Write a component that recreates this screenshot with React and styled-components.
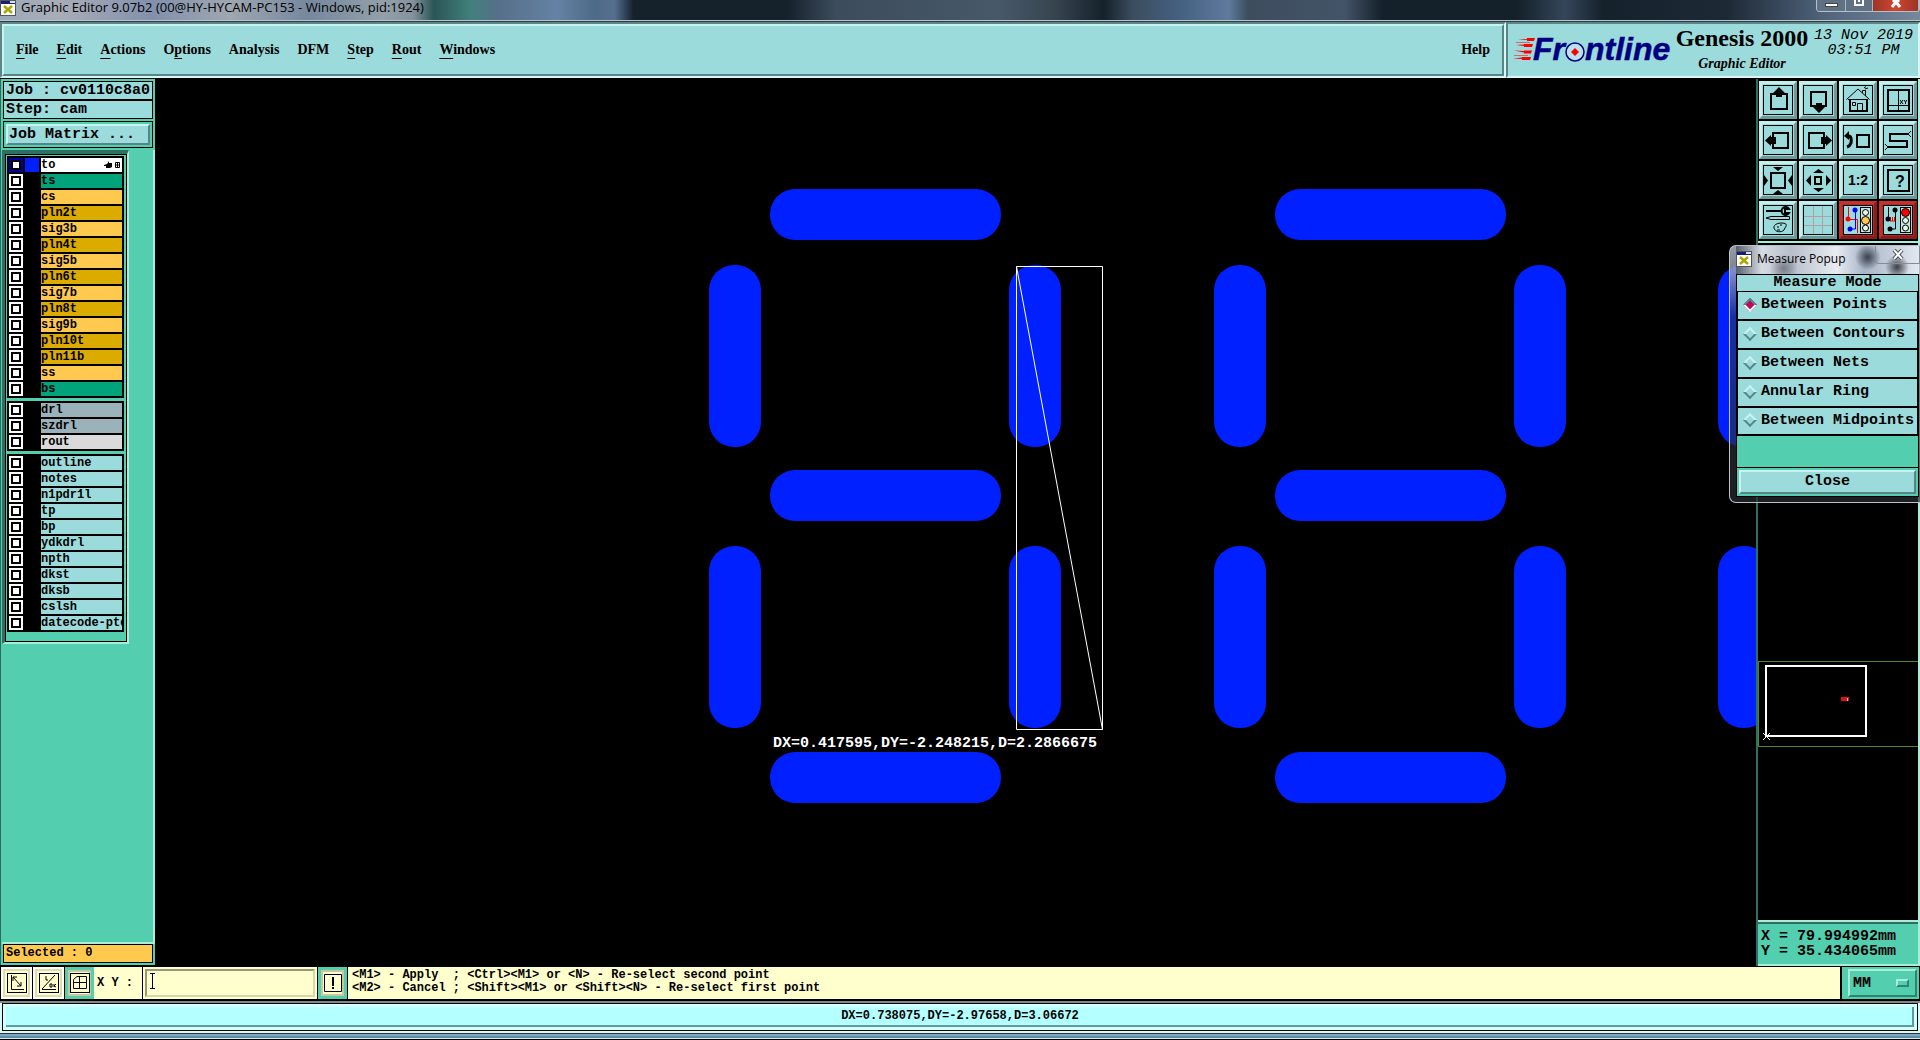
import { useState } from "react";
import styled, { createGlobalStyle, css } from "styled-components";

const face = "#9bdbdb";
const green = "#53cfb0";
const cream = "#ffffce";
const mono = `"Liberation Mono", "Courier New", monospace`;
const serif = `"Liberation Serif", "Times New Roman", serif`;
const ui = `"Open Sans", "Noto Sans", sans-serif`;

const GlobalStyle = createGlobalStyle`
  * {
    box-sizing: border-box;
  }
  body {
    margin: 0;
    background: #000;
    overflow: hidden;
  }
  button, input, select {
    margin: 0;
    padding: 0;
    border: 0;
    border-radius: 0;
    color: #000;
    background: none;
    font: inherit;
  }
  svg {
    display: block;
  }
`;

const raised = css`
  border: 2px solid;
  border-color: #c9f3f1 #568587 #568587 #c9f3f1;
`;

const Screen = styled.div`
  position: relative;
  display: flex;
  flex-direction: column;
  height: 100vh;
  color: #000;
  background: #000;
  font-family: ${mono};
  font-size: 15px;
  font-weight: bold;
`;

/* ---------- title bar ---------- */

const TitleBar = styled.div`
  position: relative;
  display: flex;
  align-items: flex-start;
  flex: none;
  height: 22px;
  overflow: hidden;
  border-bottom: 1px solid #2b3d47;
  box-shadow: inset 0 -1px 0 #b9c6cd;
  background: linear-gradient(
    90deg,
    #9aa8b8 0,
    #a9adb8 3%,
    #8290ac 8%,
    #9fa7b0 12%,
    #76889f 16%,
    #93a0a9 20%,
    #83929c 21.5%,
    #2b5555 22.6%,
    #41807c 24.5%,
    #566f8a 26%,
    #6582a4 29%,
    #4d6a88 31%,
    #55708e 32%,
    #15212b 33%,
    #15212b 41%,
    #3c4c5c 43.5%,
    #475869 52%,
    #36444f 55%,
    #15212b 57.5%,
    #3b4d5e 59%,
    #456182 61.5%,
    #5f7a9c 64%,
    #3d4d5e 65%,
    #445468 70%,
    #14202a 72%,
    #14202a 79%,
    #35465a 81.5%,
    #15212b 83.5%,
    #1d2a36 90%,
    #50637b 95%,
    #77889c 100%
  );
`;

const TitleText = styled.div`
  margin-left: 5px;
  margin-top: -2px;
  font: 13px/18px ${ui};
  white-space: nowrap;
`;

const WindowButtons = styled.div`
  display: flex;
  margin-left: auto;
  height: 12px;
  border: 1px solid #b4c0cb;
  border-top: 0;
  border-radius: 0 0 4px 4px;
  overflow: hidden;
`;

const WindowButton = styled.button`
  display: flex;
  align-items: flex-start;
  justify-content: center;
  width: ${(p) => p.$width}px;
  border-right: 1px solid #aab6c2;
  background: ${(p) => (p.$close ? "linear-gradient(90deg, #9d3427, #cf4630, #9d3427)" : "#5f7183")};
`;

/* ---------- header ---------- */

const Header = styled.header`
  display: flex;
  flex: none;
  height: 56px;
`;

const MenuFrame = styled.div`
  flex: 1;
  display: flex;
  border: 2px solid;
  border-color: #5c8587 #d8f6f6 #d8f6f6 #5c8587;
`;

const MenuBar = styled.nav`
  ${raised}
  flex: 1;
  display: flex;
  align-items: center;
  gap: 18px;
  padding: 0 12px;
  background: ${face};
`;

const MenuButton = styled.button`
  font: bold 14px/20px ${serif};
  u {
    text-underline-offset: 4px;
    text-decoration-thickness: 1px;
    text-decoration-skip-ink: none;
  }
  &:last-child {
    margin-left: auto;
  }
`;

const Brand = styled.div`
  display: flex;
  width: 414px;
  padding: 0 3px 0 0;
  border: 2px solid;
  border-color: #5c8587 #d8f6f6 #d8f6f6 #5c8587;
  background: ${face};
`;

const Product = styled.div`
  width: 140px;
  text-align: center;
  font-family: ${serif};
`;

const ProductName = styled.h1`
  margin: 0;
  font-size: 24px;
  line-height: 28px;
  white-space: nowrap;
`;

const ProductSub = styled.div`
  font-size: 14px;
  font-style: italic;
  line-height: 24px;
`;

const Clock = styled.div`
  flex: 1;
  padding-top: 4px;
  text-align: center;
  font-size: 15px;
  font-weight: normal;
  font-style: italic;
  line-height: 15px;
  white-space: nowrap;
`;

/* ---------- left panel ---------- */

const Main = styled.main`
  display: flex;
  flex: 1;
  min-height: 0;
  padding-top: 1px;
`;

const SidePanel = styled.aside`
  display: flex;
  flex-direction: column;
  width: 155px;
  margin-bottom: 1px;
  padding: 2px 2px 2px 1px;
  border-left: 1px solid #2c6b5e;
  background: ${green};
`;

const InfoBox = styled.div`
  height: 19px;
  margin-left: 1px;
  padding-left: 2px;
  border: 1px solid #000;
  background: ${(p) => p.$color || face};
  font-size: ${(p) => (p.$small ? 12 : 15)}px;
  line-height: ${(p) => (p.$small ? 16 : 18)}px;
  white-space: nowrap;
`;

const MatrixFrame = styled.div`
  display: flex;
  height: 27px;
  margin: 2px 0 2px 1px;
  padding: 2px;
  border: 1px solid #000;
`;

const FlatButton = styled.button`
  ${raised}
  flex: 1;
  padding: 0 1px;
  text-align: ${(p) => p.$align || "center"};
  line-height: 18px;
  background: ${face};
`;

const LayerArea = styled.div`
  flex: 1;
  min-height: 0;
  margin-right: -2px;
  border: solid #a9ecd9;
  border-width: 0 2px 2px 0;
`;

const LayerFrame = styled.div`
  width: 127px;
  border: solid;
  border-width: 4px 2px 2px 3px;
  border-color: #2f6e61 #a9ecd9 #a9ecd9 #2f6e61;
`;

const LayerList = styled.div`
  display: flex;
  flex-direction: column;
  gap: 3px;
  padding: 1px 2px 9px 1px;
  border: 1px solid #000;
`;

const LayerGroup = styled.div`
  display: flex;
  flex-direction: column;
  gap: 2px;
  padding: 2px;
  background: #000;
`;

const LayerRow = styled.label`
  display: grid;
  grid-template-columns: 14px 14px 1fr;
  gap: 2px;
  height: 14px;
`;

const LayerCheck = styled.input`
  appearance: none;
  width: 10px;
  height: 10px;
  margin: 2px;
  border: 2px solid #000;
  background: #fff;
  box-shadow: 0 0 0 2px ${(p) => (p.$active ? "#0000a0" : "#fff")};
`;

const LayerColor = styled.span`
  background: ${(p) => p.$color};
`;

const LayerName = styled.span`
  display: flex;
  align-items: center;
  justify-content: space-between;
  min-width: 0;
  overflow: hidden;
  background: ${(p) => p.$color};
  font-size: 12px;
  line-height: 14px;
  white-space: nowrap;
`;

/* ---------- canvas ---------- */

const Canvas = styled.section`
  position: relative;
  flex: 1;
  min-width: 0;
  overflow: hidden;
`;

const Measure = styled.output`
  position: absolute;
  left: 618px;
  top: 656px;
  color: #fff;
  line-height: 18px;
`;

/* ---------- right column ---------- */

const RightColumn = styled.aside`
  display: flex;
  flex-direction: column;
  width: 164px;
  border: solid;
  border-width: 0 2px;
  border-color: #2f6e61 #a9ecd9 #a9ecd9 #2f6e61;
`;

const Tools = styled.div`
  display: grid;
  grid-template-columns: repeat(4, 38px);
  gap: 2px;
  padding: 2px 1px;
  border-bottom: 2px solid #a9ecd9;
`;

const ToolButton = styled.button`
  height: 38px;
  padding: 1px;
  border: 3px solid;
  border-color: ${(p) => (p.$red ? "#c83030 #8e1b1b #8e1b1b #c83030" : "#c3efed #6a9a9b #6a9a9b #c3efed")};
  background: ${(p) => (p.$red ? "#b82626" : face)};
  svg {
    background: ${face};
  }
`;

const Overview = styled.div`
  flex: 1;
  min-height: 0;
`;

const Coords = styled.div`
  height: 46px;
  padding: 7px 3px 0;
  border: solid;
  border-width: 2px 0;
  border-color: #a9ecd9;
  box-shadow: inset 0 2px 0 #2f6e61;
  background: ${green};
  line-height: 15px;
  white-space: nowrap;
`;

/* ---------- popup ---------- */

const Popup = styled.section`
  position: absolute;
  right: 0;
  top: 245px;
  width: 191px;
  padding: 0 1px 5px 6px;
  border: 1px solid #b9c2cb;
  border-right: 0;
  border-radius: 7px 0 0 7px;
  background: linear-gradient(180deg, rgba(176, 186, 198, 0.85) 0, rgba(160, 170, 184, 0.75) 28px, rgba(50, 60, 78, 0.5) 70px, rgba(40, 44, 50, 0.7) 100%);
`;

const PopupTitle = styled.div`
  display: flex;
  align-items: flex-start;
  height: 28px;
  padding-top: 5px;
  background:
    radial-gradient(circle at 72% 40%, rgba(20, 24, 32, 0.75) 0, transparent 13px),
    radial-gradient(circle at 88% 75%, rgba(40, 44, 52, 0.9) 0, transparent 12px),
    radial-gradient(circle at 26% 80%, rgba(70, 76, 88, 0.6) 0, transparent 14px),
    linear-gradient(90deg, #56606e 0, #d5dbe2 14%, #b7bfcb 30%, #e8ecf2 55%, #a9b5c8 70%, #e3e8ef 100%);
`;

const PopupName = styled.h2`
  margin: -1px 0 0 5px;
  font: 12px/18px ${ui};
`;

const PopupClose = styled.button`
  display: flex;
  justify-content: center;
  width: 45px;
  height: 18px;
  margin: -5px -1px 0 auto;
  padding-top: 3px;
  border: 1px solid #838d99;
  border-top: 0;
  border-radius: 0 0 0 4px;
`;

const PopupBody = styled.div`
  background: ${green};
  border: 1px solid #000;
`;

const ModeTitle = styled.div`
  height: 16px;
  text-align: center;
  line-height: 16px;
  background: ${face};
`;

const ModeRow = styled.label`
  display: flex;
  align-items: center;
  gap: 6px;
  height: 29px;
  padding: 0 0 2px 7px;
  border: 1px solid #000;
  border-bottom-width: ${(p) => (p.$last ? 2 : 1)}px;
  background: ${face};
  white-space: nowrap;
`;

const ModeRadio = styled.input`
  appearance: none;
  flex: none;
  width: 10px;
  height: 10px;
  transform: rotate(45deg);
  border: 2px solid;
  border-color: #c9f3f1 #568587 #568587 #c9f3f1;
  &:checked {
    border-color: #568587 #eefcfc #eefcfc #568587;
    background: #c4005c;
  }
`;

const CloseFrame = styled.div`
  display: flex;
  height: 29px;
  margin-top: 31px;
  padding: 2px;
  border-top: 1px solid #000;
`;

/* ---------- bottom ---------- */

const CommandBar = styled.footer`
  display: flex;
  flex: none;
  gap: 1px;
  height: 34px;
  padding: 1px;
  font-size: 12px;
`;

const SnapButton = styled.button`
  display: flex;
  align-items: center;
  justify-content: center;
  width: ${(p) => (p.$framed ? 29 : 31)}px;
  border: ${(p) => (p.$framed ? `3px solid ${green}` : "2px solid #fff")};
  background: ${cream};
  box-shadow: inset 0 0 0 2px ${(p) => (p.$framed ? "#c9c79c" : "#dedcae")};
`;

const XYLabel = styled.label`
  width: 48px;
  margin-left: -1px;
  padding-left: 3px;
  line-height: 32px;
  background: ${cream};
  white-space: nowrap;
`;

const XYBox = styled.div`
  position: relative;
  display: flex;
  width: 174px;
  padding: 2px;
  background: ${cream};
  svg {
    position: absolute;
    left: 6px;
    top: 6px;
  }
`;

const XYInput = styled.input`
  flex: 1;
  min-width: 0;
  padding-left: 14px;
  border: 2px solid;
  border-color: #99977a #d9d7a8 #d9d7a8 #99977a;
  outline: 0;
`;

const Hints = styled.div`
  flex: 1;
  padding: 2px 4px;
  background: ${cream};
  line-height: 13px;
  white-space: pre;
`;

const UnitFrame = styled.div`
  position: relative;
  display: flex;
  width: 77px;
  margin-left: 1px;
  padding: 2px 2px 2px 6px;
  background: ${green};
  svg {
    position: absolute;
    right: 10px;
    top: 12px;
    pointer-events: none;
  }
`;

const UnitSelect = styled.select`
  appearance: none;
  flex: 1;
  padding-left: 3px;
  border: 2px solid;
  border-color: #a9ecd9 #2b8570 #2b8570 #a9ecd9;
  font-size: 15px;
`;

const StatusFrame = styled.div`
  flex: none;
  height: 40px;
  padding: 2px 2px 0;
  border-top: 1px solid #000;
  border-bottom: 1px solid #000;
  background: linear-gradient(180deg, #7a8a8c 0 2px, #d5fbfb 2px 32px, #27343c 32px 33px, #7fa9bd 33px 35px, #5d8ca5 35px 37px, #d5e8f0 37px);
`;

const StatusLine = styled.div`
  height: 28px;
  border: 1px solid #000;
  background: #b4ffff;
  box-shadow: inset 3px 3px 0 #d4ffff, inset -3px -3px 0 #d4ffff, inset -5px -5px 0 #5e9a9a;
  text-align: center;
  font-size: 12px;
  line-height: 24px;
`;

/* ---------- data ---------- */

const orange = "#ffc84f";
const gold = "#dbab00";
const jade = "#00a37a";

const layerGroups = [
  [
    ["to", "#fff"],
    ["ts", jade],
    ["cs", orange],
    ["pln2t", gold],
    ["sig3b", orange],
    ["pln4t", gold],
    ["sig5b", orange],
    ["pln6t", gold],
    ["sig7b", orange],
    ["pln8t", gold],
    ["sig9b", orange],
    ["pln10t", gold],
    ["pln11b", gold],
    ["ss", orange],
    ["bs", jade],
  ],
  [
    ["drl", "#9bb2bb"],
    ["szdrl", "#9bb2bb"],
    ["rout", "#dadada"],
  ],
  ["outline", "notes", "n1pdr1l", "tp", "bp", "ydkdrl", "npth", "dkst", "dksb", "cslsh", "datecode-ptd"].map((n) => [n, face]),
];

const menus = [
  ["", "F", "ile"],
  ["", "E", "dit"],
  ["", "A", "ctions"],
  ["O", "p", "tions"],
  ["Analysis", "", ""],
  ["DFM", "", ""],
  ["", "S", "tep"],
  ["", "R", "out"],
  ["", "W", "indows"],
  ["Help", "", ""],
];

const modes = ["Between Points", "Between Contours", "Between Nets", "Annular Ring", "Between Midpoints"];

const Thick = ({ d }) => <path d={d} fill="none" stroke="#000" strokeWidth="2" />;
const Thin = ({ d }) => <path d={d} fill="none" stroke="#000" strokeWidth="1" />;

const TrafficLight = ({ red }) => (
  <g stroke="#000">
    <rect x="17.5" y="2.5" width="10" height="25" fill="#c9e7dc" />
    <circle cx="22.5" cy="7.500" r={red ? 4 : 3} fill={red ? "#f00" : "#e6f5ee"} />
    <circle cx="22.5" cy="15.500" r={red ? 3 : 4} fill={red ? "#e6f5ee" : "#ffc84f"} />
    <circle cx="22.5" cy="23" r="3" fill="#e6f5ee" />
  </g>
);

const tools = [
  { name: "Pan up", icon: <><Thick d="M8 9H24V24H8Z" /><path d="M16 2L22 8H19V12H13V8H10Z" /></> },
  { name: "Pan down", icon: <><Thick d="M8 7H23V21H8Z" /><path d="M16 28L22 22H19V18H13V22H10Z" /></> },
  {
    name: "Home",
    icon: (
      <>
        <Thin d="M3.5 14.5L15 4L26.5 14.5M14.5 26V18.5H19.5V26M9.5 17.5H12.5V20.5H9.5ZM19.5 8V5.5H22.5V11M21 3L23 1.5M22 4L25 3M5 14.5H25" />
        <Thick d="M7 14V26H24V14" />
      </>
    ),
  },
  { name: "Zoom at XY", icon: <><Thick d="M5 5H26V26H5Z" /><Thin d="M15.5 5V26M5 20.5H26M17 15L20 19M20 15L17 19M21 15L22.5 17L24 15M22.5 17V19" /></> },
  { name: "Pan left", icon: <><Thick d="M10 8H25V23H10Z" /><path d="M2 15.500L8 10V12H13V19H8V21Z" /></> },
  { name: "Pan right", icon: <><Thick d="M6 8H21V23H6Z" /><path d="M29 15.500L23 10V12H18V19H23V21Z" /></> },
  { name: "Previous", icon: <><Thick d="M14 10H26V22H14Z" /><path d="M4 11H6Q9 12 8 18Q7 21 4 22" fill="none" stroke="#000" strokeWidth="3" /><path d="M1 11L6 6V15Z" /></> },
  { name: "Serpentine", icon: <><Thick d="M25 9H7V16H24V22H5" /><Thin d="M25 9L28 6M25 9L28 12M5 22L2 19M5 22L2 25" /></> },
  { name: "Zoom in", icon: <><Thick d="M8 8H22V23H8Z" /><path d="M10 2H20L15 6ZM10 29H20L15 25ZM1 10V21L5 15.500ZM29 10V21L25 15.500Z" /></> },
  { name: "Zoom out", icon: <><Thick d="M12 12H18V19H12Z" /><path d="M10 8H21L15.500 4ZM10 23H21L15.500 27ZM8 10V21L3 15.500ZM23 10V21L28 15.500Z" /></> },
  { name: "Scale", icon: <text x="15" y="20" textAnchor="middle" fontFamily="Liberation Sans, sans-serif" fontWeight="bold" fontSize="14">1:2</text> },
  {
    name: "Help",
    icon: (
      <>
        <Thick d="M5 5H26V26H5Z" />
        <text x="17" y="22" textAnchor="middle" fontFamily="Liberation Sans, sans-serif" fontWeight="bold" fontSize="16">?</text>
      </>
    ),
  },
  {
    name: "Edit tools",
    icon: (
      <>
        <path d="M3 5H19V7H3Z" />
        <path d="M26 4A4 4 0 1 0 26 8H22V4Z" fill="none" stroke="#000" strokeWidth="2" />
        <Thin d="M3 13L8 11.500H26.500V14.500H8Z" />
        <Thin d="M11 23C10 19 17 17 22 18.500C25 20 22 22 21 25C18 28 12 27 11 23ZM14 22H16M17 20H19M14 25H17" />
      </>
    ),
  },
  { name: "Grid", icon: <path d="M10.500 1V29M19.500 1V29M1 11.500H29M1 20.500H29" stroke="#b3a0a5" /> },
  {
    name: "Net on",
    red: true,
    icon: (
      <>
        <path d="M5.500 2V14.500H14.500V28" fill="none" stroke="#f00" />
        <path d="M12.500 5V24H7" fill="none" stroke="#00f" />
        <circle cx="5" cy="14" r="2.500" fill="#f00" />
        <circle cx="12" cy="5" r="2.500" fill="#00f" />
        <circle cx="7" cy="24" r="2.500" fill="#00f" />
        <TrafficLight />
      </>
    ),
  },
  {
    name: "Net off",
    red: true,
    icon: (
      <>
        <Thin d="M5.500 2V14.500M12.500 5V24H7" />
        <path d="M7 16H12M7.500 12V16M9.500 12V16M11.500 12V16" stroke="#f00" />
        <circle cx="5" cy="14" r="2.500" />
        <circle cx="12" cy="5" r="2.500" />
        <circle cx="7" cy="24" r="2.500" />
        <TrafficLight red />
      </>
    ),
  },
];

const snaps = [
  { name: "Snap diagonal", d: "M4.500 2V16.500H17M6 4L14 13M6 4V8M6 4H10M14 13H10M14 13V9" },
  { name: "Snap angle", d: "M3 16.500H17M3 16L16 2M7 3V7H9M11 11V14H13V11ZM15 11V14M17 11L15 13L17 14" },
  { name: "Snap grid", d: "M3.500 6.500L7 3.500H16.500V15.500H3.500ZM9.500 4V15M4 9.500H16", framed: true },
];

const AppIcon = () => (
  <svg width="16" height="16" viewBox="0 0 16 16">
    <rect x="0.500" y="0.500" width="15" height="15" fill="#fff" stroke="#555" />
    <rect x="1" y="1" width="14" height="3" fill="#16207a" />
    <rect x="10" y="1" width="5" height="2" fill="#dfe3f0" />
    <path d="M4 6L12 13M12 6L4 13" stroke="#a8a800" strokeWidth="2.500" />
  </svg>
);

const Logo = () => (
  <svg width="164" height="52" viewBox="1508 24 164 52">
    <path
      d="M1518 39.500L1527 39V38H1535L1534 41H1527V40ZM1516 45L1524 44.500V44H1533L1532 47H1524V46ZM1514 50.500L1524 51V50.500H1532L1531 53.500H1524V52.500ZM1513 58.500L1522 57.500V57H1531L1530 60H1522V59ZM1516 42H1530V42.500H1516ZM1514 55.500H1528V56H1514Z"
      fill="#f00"
    />
    <g fill="#000080" stroke="#000080" strokeWidth="0.500" fontFamily="Liberation Sans, Arial, sans-serif" fontWeight="bold" fontStyle="italic" fontSize="32">
      <text x="1533" y="60">Fr</text>
      <text x="1585" y="60">ntline</text>
    </g>
    <circle cx="1575" cy="52" r="9" fill="#b9e2ea" stroke="#000080" strokeWidth="1.500" />
    <path d="M1575 48L1579 52L1575 56L1571 52Z" fill="#f00" />
  </svg>
);

const Digit = ({ x }) => (
  <g transform={`translate(${x} 0)`}>
    <rect x="61" y="110" width="231" height="51" rx="25" />
    <rect x="61" y="391" width="231" height="51" rx="25" />
    <rect x="61" y="673" width="231" height="51" rx="25" />
    <rect x="0" y="186" width="52" height="182" rx="25" />
    <rect x="0" y="467" width="52" height="182" rx="25" />
    <rect x="300" y="186" width="52" height="182" rx="25" />
    <rect x="300" y="467" width="52" height="182" rx="25" />
  </g>
);

const App = () => {
  const [mode, setMode] = useState(modes[0]);
  const [xy, setXy] = useState("");

  return (
    <Screen>
      <GlobalStyle />
      <TitleBar>
        <AppIcon />
        <TitleText>Graphic Editor 9.07b2 (00@HY-HYCAM-PC153 - Windows, pid:1924)</TitleText>
        <WindowButtons>
          <WindowButton $width={29} aria-label="Minimize">
            <svg width="13" height="8"><rect x="0.500" y="3.500" width="12" height="3" fill="#fff" stroke="#444" /></svg>
          </WindowButton>
          <WindowButton $width={27} aria-label="Maximize">
            <svg width="12" height="8"><path d="M2 0V5H10V0M5 1H7" fill="none" stroke="#fff" strokeWidth="2" /></svg>
          </WindowButton>
          <WindowButton $width={46} $close aria-label="Close window">
            <svg width="12" height="8"><path d="M2 7L6 2L10 7M3 0L6 3L9 0" fill="none" stroke="#fff" strokeWidth="3" /></svg>
          </WindowButton>
        </WindowButtons>
      </TitleBar>

      <Header>
        <MenuFrame>
          <MenuBar>
            {menus.map(([before, key, after]) => (
              <MenuButton key={before + key + after}>
                {before}
                {key && <u>{key}</u>}
                {after}
              </MenuButton>
            ))}
          </MenuBar>
        </MenuFrame>
        <Brand>
          <Logo />
          <Product>
            <ProductName>Genesis 2000</ProductName>
            <ProductSub>Graphic Editor</ProductSub>
          </Product>
          <Clock>
            13 Nov 2019
            <br />
            03:51 PM
          </Clock>
        </Brand>
      </Header>

      <Main>
        <SidePanel>
          <InfoBox>Job : cv0110c8a0</InfoBox>
          <InfoBox>Step: cam</InfoBox>
          <MatrixFrame>
            <FlatButton $align="left">Job Matrix ...</FlatButton>
          </MatrixFrame>
          <LayerArea>
            <LayerFrame>
              <LayerList>
                {layerGroups.map((group, i) => (
                  <LayerGroup key={i}>
                    {group.map(([name, color]) => (
                      <LayerRow key={name}>
                        <LayerCheck type="checkbox" $active={name === "to"} />
                        <LayerColor $color={name === "to" ? "#0020ff" : "#000"} />
                        <LayerName $color={color}>
                          {name}
                          {name === "to" && (
                            <svg width="18" height="10" viewBox="0 0 18 10">
                              <path d="M0 5L3 4L5 1V3H8V7L6 8H2V6H0Z" />
                              <path d="M11.500 2.500H15.500V7.500H11.500ZM13.500 2V8M11 5H16" fill="none" stroke="#000" />
                            </svg>
                          )}
                        </LayerName>
                      </LayerRow>
                    ))}
                  </LayerGroup>
                ))}
              </LayerList>
            </LayerFrame>
          </LayerArea>
          <InfoBox $small $color={orange}>Selected : 0</InfoBox>
        </SidePanel>

        <Canvas>
          <svg width="100%" height="100%">
            <g fill="#0020ff">
              <Digit x={554} />
              <Digit x={1059} />
              <Digit x={1563} />
            </g>
            <path d="M861.500 187.500H947.500V650.500H861.500ZL947.500 650.500" fill="none" stroke="#fff" />
          </svg>
          <Measure>DX=0.417595,DY=-2.248215,D=2.2866675</Measure>
        </Canvas>

        <RightColumn>
          <Tools>
            {tools.map((tool) => (
              <ToolButton key={tool.name} aria-label={tool.name} $red={tool.red}>
                <svg width="30" height="30" viewBox="0 0 30 30">
                  <rect x="0.500" y="0.500" width="29" height="29" fill="none" stroke="#000" />
                  {tool.icon}
                </svg>
              </ToolButton>
            ))}
          </Tools>
          <Overview>
            <svg width="100%" height="100%">
              <path d="M0.500 418.500H170M0.500 503.500H170M0.500 418V504" fill="none" stroke="#4e8a2c" />
              <rect x="8" y="423" width="100" height="70" fill="none" stroke="#fff" strokeWidth="2" />
              <rect x="83" y="454" width="8" height="4" fill="#e01010" />
              <path d="M89.500 455V458" stroke="#ccc" />
              <path d="M5 490L12 497M12 490L5 497" stroke="#fff" />
            </svg>
          </Overview>
          <Coords>
            X = 79.994992mm
            <br />
            Y = 35.434065mm
          </Coords>
        </RightColumn>
      </Main>

      <CommandBar>
        {snaps.map((snap) => (
          <SnapButton key={snap.name} aria-label={snap.name} $framed={snap.framed}>
            <svg width="20" height="20" viewBox="0 0 20 20">
              <rect x="0.500" y="0.500" width="19" height="19" fill="none" stroke="#000" />
              <Thin d={snap.d} />
            </svg>
          </SnapButton>
        ))}
        <XYLabel htmlFor="xy">X Y :</XYLabel>
        <XYBox>
          <XYInput id="xy" value={xy} onChange={(e) => setXy(e.target.value)} />
          <svg width="7" height="16"><path d="M1 0.500H6M3.500 1V15M1 15.500H6" stroke="#000" /></svg>
        </XYBox>
        <SnapButton $framed aria-label="Alert">
          <svg width="18" height="18" viewBox="0 0 18 18">
            <path d="M0.500 0.500H17.500V17.500H0.500Z" fill="none" stroke="#000" />
            <path d="M8 3H10V12H8ZM8 13H10V15H8Z" />
          </svg>
        </SnapButton>
        <Hints>
          {"<M1> - Apply  ; <Ctrl><M1> or <N> - Re-select second point\n"}
          {"<M2> - Cancel ; <Shift><M1> or <Shift><N> - Re-select first point"}
        </Hints>
        <UnitFrame>
          <UnitSelect aria-label="Units">
            <option>MM</option>
          </UnitSelect>
          <svg width="13" height="8">
            <rect width="13" height="8" fill="#2b8570" />
            <path d="M0 0H13L11 2H2V6L0 8Z" fill="#a9ecd9" />
            <rect x="2" y="2" width="9" height="4" fill={green} />
          </svg>
        </UnitFrame>
      </CommandBar>

      <StatusFrame>
        <StatusLine>DX=0.738075,DY=-2.97658,D=3.06672</StatusLine>
      </StatusFrame>

      <Popup>
        <PopupTitle>
          <AppIcon />
          <PopupName>Measure Popup</PopupName>
          <PopupClose aria-label="Close popup">
            <svg width="12" height="11"><path d="M2 1L10 10M10 1L2 10" stroke="#444c56" strokeWidth="4" /><path d="M2 1L10 10M10 1L2 10" stroke="#fff" strokeWidth="2" /></svg>
          </PopupClose>
        </PopupTitle>
        <PopupBody>
          <ModeTitle>Measure Mode</ModeTitle>
          {modes.map((m, i) => (
            <ModeRow key={m} $last={i === modes.length - 1}>
              <ModeRadio type="radio" name="mode" checked={mode === m} onChange={() => setMode(m)} />
              {m}
            </ModeRow>
          ))}
          <CloseFrame>
            <FlatButton>Close</FlatButton>
          </CloseFrame>
        </PopupBody>
      </Popup>
    </Screen>
  );
};

export default App;
